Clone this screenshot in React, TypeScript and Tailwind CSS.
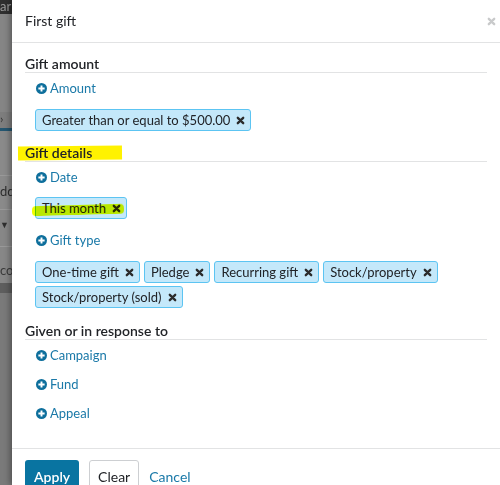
import { ReactNode } from 'react';

function XMark({ className = '' }: { className?: string }) {
  return (
    <svg viewBox="0 0 10 10" className={className} aria-hidden>
      <path d="M2 2 L8 8 M8 2 L2 8" stroke="currentColor" strokeWidth="2.6" strokeLinecap="round" />
    </svg>
  );
}

function PlusCircle() {
  return (
    <svg viewBox="0 0 12 12" className="h-[11px] w-[11px] shrink-0" aria-hidden>
      <circle cx="6" cy="6" r="6" fill="#0e6f9c" />
      <path d="M6 2.6 V9.4 M2.6 6 H9.4" stroke="white" strokeWidth="2.1" />
    </svg>
  );
}

function AddLink({ label, className = '' }: { label: string; className?: string }) {
  return (
    <div className={`flex h-[18px] items-center gap-[3px] pl-[11px] text-[13px] leading-[18px] text-[#1a79a8] ${className}`}>
      <PlusCircle />
      <span>{label}</span>
    </div>
  );
}

function Chip({ children }: { children: ReactNode }) {
  return (
    <span className="flex h-[22px] items-center gap-[6px] rounded-[3px] border border-[#5cc4f2] bg-[#c4e8fa] pl-[6px] pr-[5px] text-[13px] leading-[20px] text-[#212327]">
      <span>{children}</span>
      <XMark className="h-[9px] w-[9px] text-[#2b2b2b]" />
    </span>
  );
}

function Heading({ children, className = '' }: { children: ReactNode; className?: string }) {
  return (
    <h3 className={`border-b border-[#e2e3e4] text-[14px] font-semibold leading-[16px] text-[#212327] ${className}`}>
      {children}
    </h3>
  );
}

function Backdrop() {
  return (
    <div className="flex w-[12px] shrink-0 flex-col overflow-hidden bg-[#7d7d7d]">
      <div className="h-[14px] shrink-0 overflow-hidden bg-[#2f2f2f] text-[13px] leading-[12px] text-[#9a9a9a]">ar</div>
      <div className="h-[98px] shrink-0 bg-[#858585]" />
      <div className="h-[16px] shrink-0 text-[12px] leading-[14px] text-[#333]">›</div>
      <div className="h-[3px] shrink-0 bg-[#245670]" />
      <div className="h-[44px] shrink-0 bg-[#8a8a8a]" />
      <div className="h-px shrink-0 bg-[#999]" />
      <div className="h-[33px] shrink-0 bg-[#8a8a8a] pt-[7px] text-[13px] leading-[16px] text-[#2e2e2e]">dd</div>
      <div className="h-px shrink-0 bg-[#999]" />
      <div className="h-[36px] shrink-0 bg-[#878787] pt-[10px] text-[9px] leading-[10px] text-[#2e2e2e]">▼</div>
      <div className="h-px shrink-0 bg-[#999]" />
      <div className="h-[36px] shrink-0 bg-[#878787] pt-[15px] text-[13px] leading-[16px] text-[#3a3a3a]">co</div>
      <div className="h-[10px] shrink-0 bg-[#5e5e5e]" />
      <div className="flex-1 bg-[#7a7a7a]" />
    </div>
  );
}

export default function App() {
  return (
    <div className="flex h-[485px] w-[500px] overflow-hidden bg-white font-['Lato','Open_Sans',sans-serif]">
      <Backdrop />
      <div className="relative flex min-w-0 flex-1 flex-col bg-white shadow-[-2px_0_6px_rgba(0,0,0,0.35)]">
        {/* Header */}
        <div className="flex h-[43px] shrink-0 items-center justify-between border-b border-[#e2e3e4] pl-[13px] pr-[4px]">
          <h2 className="text-[14px] leading-[20px] text-[#212327]">First gift</h2>
          <XMark className="h-[9px] w-[9px] text-[#c9cacb]" />
        </div>

        {/* Body */}
        <div className="flex flex-1 flex-col px-[13px] pt-[13px]">
          <Heading>Gift amount</Heading>
          <AddLink label="Amount" className="mt-[6px]" />
          <div className="mt-[12px] flex pl-[10px]">
            <Chip>Greater than or equal to $500.00</Chip>
          </div>

          <div className="relative mt-[14px]">
            <div className="pointer-events-none absolute left-[-7px] top-[1px] h-[14px] w-[104px] -rotate-[0.5deg] bg-[#fff200] mix-blend-multiply" />
            <Heading className="relative">Gift details</Heading>
          </div>
          <AddLink label="Date" className="mt-[6px]" />
          <div className="relative mt-[11px] flex pl-[10px]">
            <Chip>This month</Chip>
            <div className="pointer-events-none absolute left-[7px] top-[8px] h-[10px] w-[92px] -rotate-[1.5deg] rounded-[4px] bg-[#f2ff00] mix-blend-multiply" />
          </div>
          <AddLink label="Gift type" className="mt-[12px]" />
          <div className="mt-[12px] flex flex-wrap gap-x-[4px] gap-y-[3px] pl-[10px]">
            <Chip>One-time gift</Chip>
            <Chip>Pledge</Chip>
            <Chip>Recurring gift</Chip>
            <Chip>Stock/property</Chip>
            <Chip>Stock/property (sold)</Chip>
          </div>

          <Heading className="mt-[15px]">Given or in response to</Heading>
          <AddLink label="Campaign" className="mt-[6px]" />
          <AddLink label="Fund" className="mt-[11px]" />
          <AddLink label="Appeal" className="mt-[11px]" />
        </div>

        {/* Footer */}
        <div className="flex h-[37px] shrink-0 items-start gap-[10px] border-t border-[#e2e3e4] pl-[13px] pt-[11px]">
          <button className="h-[32px] rounded-[3px] bg-[#0974a1] px-[9px] text-[14px] font-semibold text-white">Apply</button>
          <button className="h-[32px] rounded-[3px] border border-[#cdcfd2] bg-white px-[8px] text-[14px] text-[#212327]">Clear</button>
          <button className="h-[32px] px-0 text-[14px] text-[#1a79a8]">Cancel</button>
        </div>
      </div>
    </div>
  );
}
